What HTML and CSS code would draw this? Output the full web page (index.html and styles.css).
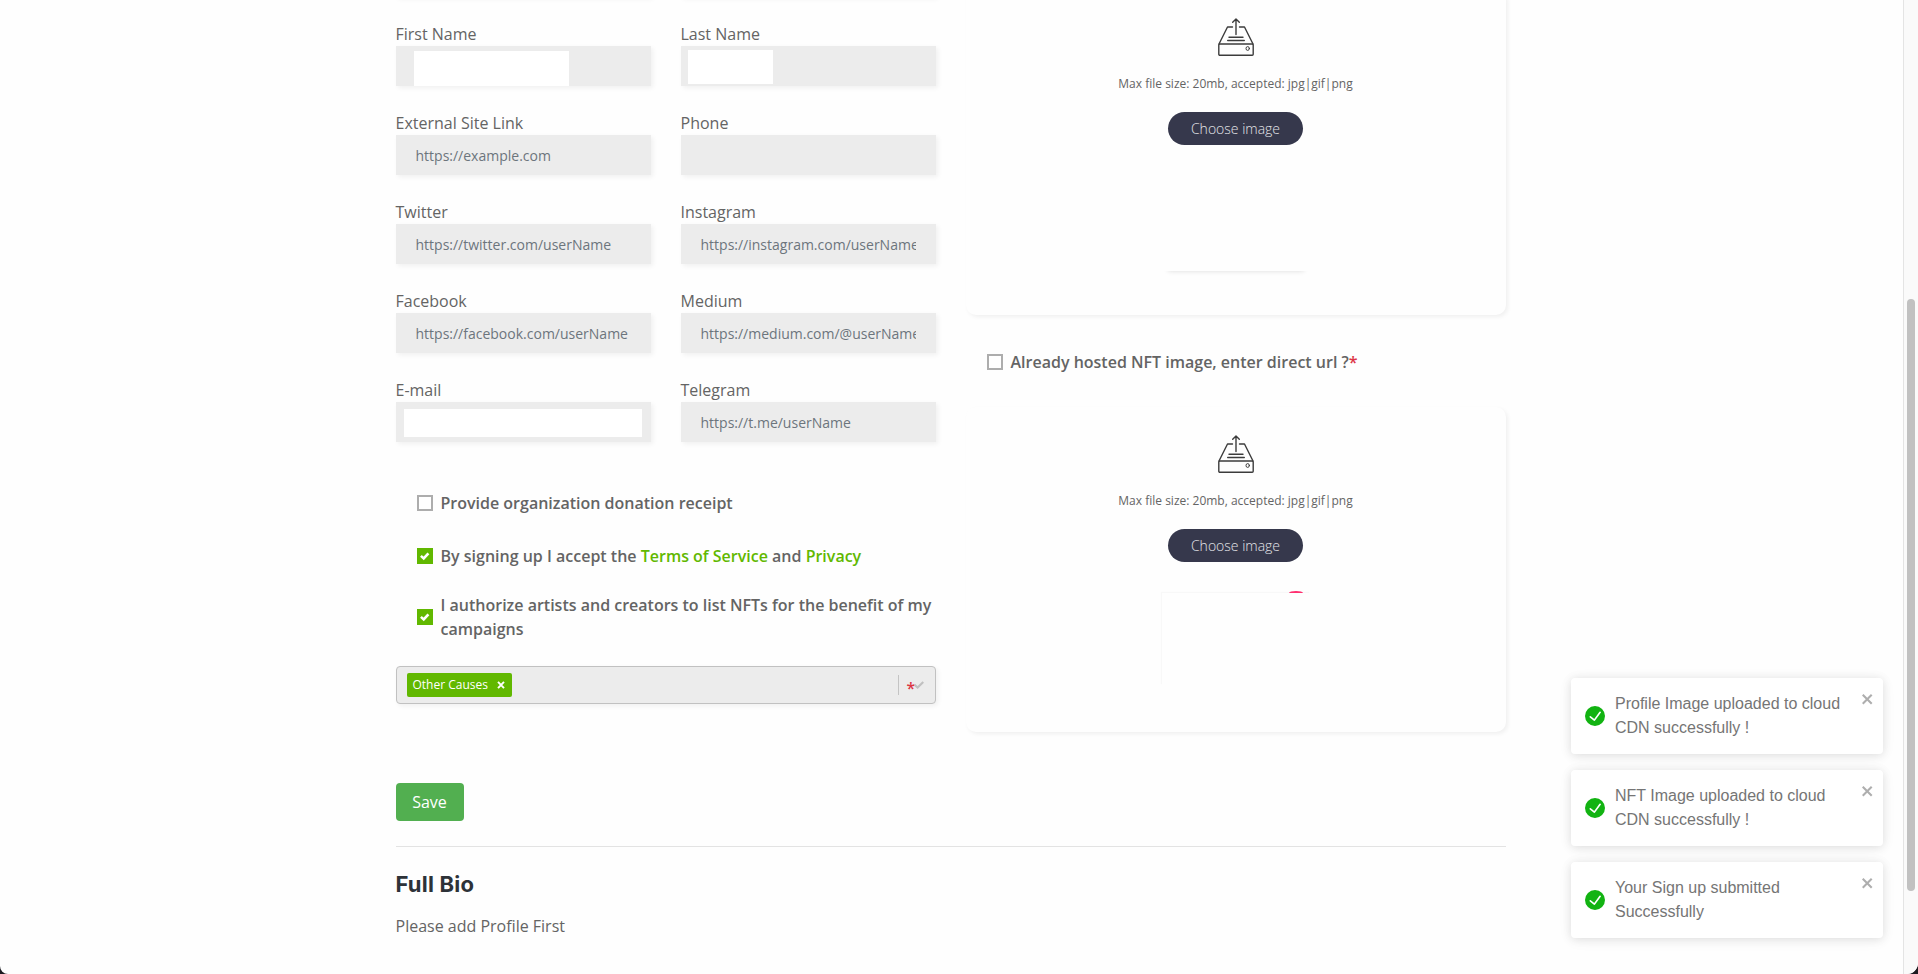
FILE: index.html
```html
<!DOCTYPE html>
<html lang="en">
<head>
<meta charset="utf-8">
<title>Profile</title>
<link rel="stylesheet" href="styles.css">
</head>
<body>
<svg class="defs" width="0" height="0">
  <symbol id="upload" viewBox="0 0 36 38">
    <g fill="none" stroke="#3c3c3c" stroke-width="1.4" stroke-linecap="round" stroke-linejoin="round">
      <path d="M14.500 9H9.500L1 26M21.500 9H26.500L35 26"/>
      <rect x=".8" y="26" width="34.400" height="11.200" rx="1"/>
      <path d="M18 16.500V1.200M14.700 4.200 18 .9 21.300 4.200M11 19.200H25M9.700 22.500H26.300"/>
      <ellipse cx="29.700" cy="30.500" rx="1.700" ry="1.900" stroke-width="1"/>
    </g>
  </symbol>
  <symbol id="ok" viewBox="0 0 24 24">
    <path fill="#12b312" d="M12 0a12 12 0 1012 12A12.014 12.014 0 0012 0zm6.927 8.200l-6.845 9.289a1.011 1.011 0 01-1.430.188l-4.888-3.908a1 1 0 111.250-1.562l4.076 3.261 6.227-8.451a1 1 0 111.610 1.183z"/>
  </symbol>
  <symbol id="tick" viewBox="0 0 16 16">
    <path fill="none" stroke="#fff" stroke-width="2.600" d="M3.900 7.900 6.700 10.400 11.400 5.300"/>
  </symbol>
  <symbol id="close" viewBox="0 0 14 16">
    <path fill="#aeaeae" fill-rule="evenodd" d="M7.710 8.230l3.750 3.750-1.480 1.480-3.750-3.750-3.750 3.750L1 11.980l3.750-3.750L1 4.480 2.480 3l3.750 3.750L9.980 3l1.480 1.480-3.750 3.750z"/>
  </symbol>
</svg>
<div class="window">
  <main class="page">
    <div class="columns">
      <section class="left">
        <div class="fields">
          <div class="cut"></div><div class="cut"></div>
          <div class="field"><label>First Name</label><div class="input"><i class="mask mask-first"></i></div></div>
          <div class="field"><label>Last Name</label><div class="input"><i class="mask mask-last"></i></div></div>
          <div class="field"><label>External Site Link</label><div class="input"><span>https://example.com</span></div></div>
          <div class="field"><label>Phone</label><div class="input"></div></div>
          <div class="field"><label>Twitter</label><div class="input"><span>https://twitter.com/userName</span></div></div>
          <div class="field"><label>Instagram</label><div class="input"><span>https://instagram.com/userName</span></div></div>
          <div class="field"><label>Facebook</label><div class="input"><span>https://facebook.com/userName</span></div></div>
          <div class="field"><label>Medium</label><div class="input"><span>https://medium.com/@userName</span></div></div>
          <div class="field"><label>E-mail</label><div class="input"><i class="mask mask-mail"></i></div></div>
          <div class="field"><label>Telegram</label><div class="input"><span>https://t.me/userName</span></div></div>
        </div>
        <div class="checks">
          <div class="check"><i class="box"></i><span>Provide organization donation receipt</span></div>
          <div class="check"><i class="box on"><svg><use href="#tick"/></svg></i><span>By signing up I accept the <a>Terms of Service</a> and <a>Privacy</a></span></div>
          <div class="check"><i class="box on"><svg><use href="#tick"/></svg></i><span>I authorize artists and creators to list NFTs for the benefit of my campaigns</span></div>
        </div>
        <div class="select">
          <div class="tag"><span>Other Causes</span><svg width="8" height="8" viewBox="0 0 8 8"><path d="M1 .8 7 7.200M7 .8 1 7.200" stroke="#fff" stroke-width="1.900"/></svg></div>
          <div class="indicator"><b>*</b><svg width="10" height="8" viewBox="0 0 10 8"><path d="M.6 3.800 3.600 6.500 9.300 1" fill="none" stroke="#c0c0c0" stroke-width="2.200"/></svg></div>
        </div>
        <button class="save">Save</button>
      </section>
      <section class="right">
        <div class="card card-top">
          <svg class="upload"><use href="#upload"/></svg>
          <p>Max file size: 20mb, accepted: jpg|gif|png</p>
          <button class="choose">Choose image</button>
          <div class="preview preview-top"></div>
        </div>
        <div class="check hosted"><i class="box"></i><span>Already hosted NFT image, enter direct url ?<em>*</em></span></div>
        <div class="card card-nft">
          <svg class="upload"><use href="#upload"/></svg>
          <p>Max file size: 20mb, accepted: jpg|gif|png</p>
          <button class="choose">Choose image</button>
          <div class="preview preview-nft"><i class="remove"></i></div>
        </div>
      </section>
    </div>
    <section class="bio">
      <h2>Full Bio</h2>
      <p>Please add Profile First</p>
    </section>
  </main>
  <aside class="scroll"><div class="thumb"></div></aside>
  <div class="toasts">
    <div class="toast"><svg class="ok"><use href="#ok"/></svg><p>Profile Image uploaded to cloud CDN successfully !</p><svg class="close"><use href="#close"/></svg></div>
    <div class="toast"><svg class="ok"><use href="#ok"/></svg><p>NFT Image uploaded to cloud CDN successfully !</p><svg class="close"><use href="#close"/></svg></div>
    <div class="toast"><svg class="ok"><use href="#ok"/></svg><p>Your Sign up submitted Successfully</p><svg class="close"><use href="#close"/></svg></div>
  </div>
</div>
</body>
</html>
```
FILE: styles.css
```css
* { box-sizing: border-box; }
html { background: #1c1a20; }
body { margin: 0; font: 16px/24px "Open Sans", sans-serif; color: #646464; overflow: hidden; }
p, h2 { margin: 0; }
i { font-style: normal; }
button { border: 0; font-family: inherit; display: block; }
.defs { position: absolute; }
.window { position: relative; display: flex; width: 1918px; height: 974px; background: #fefefe; border-radius: 0 0 11px 8px; overflow: hidden; }
.page { flex: 1; padding-left: 395.5px; }
.columns { display: flex; gap: 30px; width: 1110px; height: 846px; }
.left, .right { width: 540px; }

.fields { display: grid; grid-template-columns: 255px 255px; column-gap: 30px; row-gap: 25px; margin-top: -43px; }
.cut, .input { height: 40px; background: #ececec; box-shadow: 2px 2px 5px rgba(0,0,0,.06); }
.field label { display: block; height: 24px; }
.input { position: relative; padding: 0 20px; font-size: 14px; line-height: 42px; color: #6c757d; }
.input span { display: block; overflow: hidden; white-space: nowrap; }
.mask { position: absolute; background: #fff; }
.mask-first { left: 18px; top: 5px; width: 155px; height: 35px; }
.mask-last { left: 7px; top: 4px; width: 85px; height: 34px; }
.mask-mail { left: 8px; top: 7px; width: 238px; height: 28px; }

.checks { padding: 49px 0 0 21px; display: flex; flex-direction: column; gap: 29px; }
.check { display: flex; align-items: center; gap: 8px; font-weight: 600; }
.check:last-child { margin-top: -4px; }
.check a { color: #61b800; }
.check em { color: #dc3545; font-style: normal; }
.box { flex: none; width: 16px; height: 16px; border: 2px solid #adadad; background: #fff; }
.box.on { border: 0; background: #61b800; }
.box svg { display: block; width: 16px; height: 16px; }

.select { display: flex; justify-content: space-between; align-items: center; height: 38px; margin-top: 25px; padding: 0 11px 0 10px; border: 1px solid #c1c1c1; border-radius: 4px; background: #ececec; box-shadow: 2px 2px 5px rgba(0,0,0,.06); }
.tag { display: flex; align-items: center; gap: 9px; width: 105px; height: 24px; padding-left: 6px; border-radius: 2px; background: #61b800; color: #fff; font-size: 12px; white-space: nowrap; }
.indicator { display: flex; align-items: center; height: 20px; padding-left: 8px; border-left: 1px solid #c4c4c4; }
.indicator b { width: 7px; font-size: 16px; line-height: 20px; font-weight: 600; color: #dc3545; padding-top: 5px; }
.save { width: 68px; height: 38px; margin-top: 79px; padding: 0; border-radius: 4px; background: #52af50; color: #fff; font-size: 16px; }

.card { position: relative; display: flex; flex-direction: column; align-items: center; border-radius: 10px; background: #fefefe; box-shadow: 2px 2px 4px rgba(0,0,0,.06); }
.card-top { height: 325px; margin-top: -10px; padding-top: 28px; }
.card-nft { height: 325px; margin-top: 33px; padding-top: 28px; }
.upload { width: 36px; height: 38px; }
.card p { margin-top: 16px; font-size: 12px; }
.choose { width: 135px; height: 33px; margin-top: 16px; padding: 0; border-radius: 17px; background: #36384c; color: #e4e4e8; font-size: 14px; font-weight: 300; }
.preview { position: relative; width: 150px; }
.preview-top { height: 100px; margin-top: 26px; box-shadow: 0 7px 5px -7px rgba(0,0,0,.14); }
.preview-nft { width: 148px; height: 92px; margin-top: 31px; box-shadow: -1px -1px 1px rgba(0,0,0,.025); }
.remove { position: absolute; left: 127px; top: -2px; width: 14px; height: 2px; border-radius: 7px 7px 0 0 / 2px 2px 0 0; background: #ff2f70; }
.hosted { margin-top: 35px; padding-left: 21px; }

.bio { width: 1110px; border-top: 1px solid #e3e3e3; padding-top: 24px; }
.bio h2 { font: 700 22px/26px Inter, sans-serif; letter-spacing: .2px; color: #2d3238; }
.bio p { margin-top: 17px; }

.scroll { width: 15px; padding: 299px 3px 0; border-left: 1px solid #e4e4e4; background: #fafafa; }
.thumb { width: 8px; height: 592px; border-radius: 4px; background: #c1c1c1; }

.toasts { position: absolute; left: 1571px; top: 678px; display: flex; flex-direction: column; gap: 16px; }
.toast { display: flex; width: 312px; height: 76px; padding: 13px 8px 13px 14px; border-radius: 4px; background: #fff; box-shadow: 0 1px 10px rgba(0,0,0,.1), 0 2px 15px rgba(0,0,0,.05); font: 16px/24px "Liberation Sans", sans-serif; color: #757575; }
.toast p { width: 236px; margin: 1px 0 0 10px; }
.ok { width: 20px; height: 20px; margin-top: 15px; }
.close { width: 14px; height: 16px; margin-left: auto; }
```
